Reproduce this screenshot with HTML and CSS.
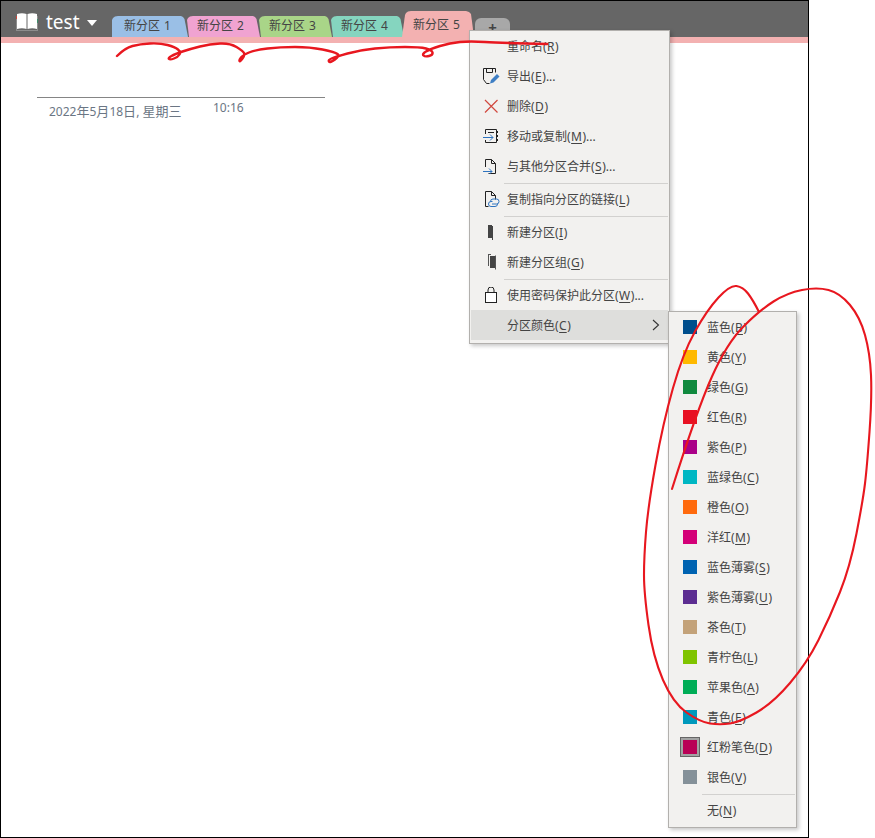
FILE: index.html
```html
<!DOCTYPE html>
<html lang="zh-CN">
<head>
<meta charset="utf-8">
<title>test</title>
<link rel="stylesheet" href="styles.css">
</head>
<body>
<div class="window">
  <header class="topbar">
    <div class="notebook">
      <svg class="book" width="22" height="18" viewBox="0 0 22 18">
        <path d="M0 3h1v14h20V3h1v15H0z" fill="#8d8d8d"/>
        <path d="M1 1c3-1 7-1 9.500 0v15C8 15 4 15 1 16z" fill="#fff"/>
        <path d="M11.500 1c3-1 6.500-1 9.500 0v15c-3-1-6.500-1-9.500 0z" fill="#fff"/>
        <rect x="0" y="3" width="1" height="3" fill="#c8453b"/>
        <rect x="21" y="6" width="1" height="4" fill="#3d8f6b"/>
      </svg>
      <span class="nb-name">test</span>
      <span class="caret"></span>
    </div>
    <nav class="tabs">
      <div class="tab tab-first tab-blue">新分区 1</div>
      <div class="tab tab-pink">新分区 2</div>
      <div class="tab tab-green">新分区 3</div>
      <div class="tab tab-teal">新分区 4</div>
      <div class="tab tab-active">新分区 5</div>
      <div class="tab-add">+</div>
    </nav>
  </header>
  <div class="strip"></div>
  <main class="page">
    <div class="page-title"></div>
    <div class="stamp">
      <span class="stamp-date"><span class="latin">2022</span>年<span class="latin">5</span>月<span class="latin">18</span>日<span class="latin">, </span>星期三</span>
      <span class="stamp-time">10:16</span>
    </div>
  </main>
</div>

<div class="menu menu-main">
  <div class="row"><span class="ico"></span><span>重命名(<u>R</u>)</span></div>
  <div class="row"><span class="ico"><svg width="17" height="16" viewBox="0 0 17 16"><path d="M.5.500h12v4M3.500.500v4h6v-4M.5.500v11l3 4h3" fill="none" stroke="#222"/><path d="M7 15.500l1-3.500 6-6 2.500 2.500-6 6z" fill="#3f7fc4"/></svg></span><span>导出(<u>E</u>)...</span></div>
  <div class="row"><span class="ico"><svg width="16" height="16" viewBox="0 0 16 16"><path d="M2 2l12.500 12.500M14.500 2L2 14.500" fill="none" stroke="#d1483e" stroke-width="1.200"/></svg></span><span>删除(<u>D</u>)</span></div>
  <div class="row"><span class="ico"><svg width="16" height="16" viewBox="0 0 16 16"><path d="M2.500 6V1.500h11v13h-11V12" fill="none" stroke="#222"/><path d="M13 3h2v2h-2zM13 7h2v2h-2zM13 11h2v2h-2z" fill="#222"/><path d="M0 9.500h10M7 6.500l3 3-3 3" fill="none" stroke="#2f74c0"/><path d="M5 4.500h6" stroke="#222" fill="none"/></svg></span><span>移动或复制(<u>M</u>)...</span></div>
  <div class="row"><span class="ico"><svg width="16" height="16" viewBox="0 0 16 16"><path d="M2.500 9V1.500h6l4 4v10h-7M8.500 1.500v4h4" fill="none" stroke="#222"/><path d="M0 13.500h9M6 10.500l3 3-3 3" fill="none" stroke="#2f74c0"/></svg></span><span>与其他分区合并(<u>S</u>)...</span></div>
  <div class="sep"></div>
  <div class="row"><span class="ico"><svg width="17" height="16" viewBox="0 0 17 16"><path d="M2.500 15.500V.5h6l4 4v4M8.500.5v4h4M2.500 15.500h3" fill="none" stroke="#222"/><path d="M9.500 10.500H8a2.500 2.500 0 0 0 0 5h4a2.500 2.500 0 0 0 2.500-2.500M9 13h4.500a2.500 2.500 0 0 0 0-5H10a2.500 2.500 0 0 0-2.500 2.500" fill="none" stroke="#2f74c0"/></svg></span><span>复制指向分区的链接(<u>L</u>)</span></div>
  <div class="sep"></div>
  <div class="row"><span class="ico"><svg width="16" height="16" viewBox="0 0 16 16"><path d="M5 1h4v1h1v14H9v-2H5z" fill="#444"/></svg></span><span>新建分区(<u>I</u>)</span></div>
  <div class="row"><span class="ico"><svg width="16" height="16" viewBox="0 0 16 16"><path d="M5.500 1v11M5 .5h3M12.500 1.500V15.500" stroke="#555" fill="none"/><path d="M7 2h5v12H7z" fill="#444"/></svg></span><span>新建分区组(<u>G</u>)</span></div>
  <div class="sep"></div>
  <div class="row"><span class="ico"><svg width="16" height="16" viewBox="0 0 16 16"><rect x="2.500" y="5.500" width="11" height="10" fill="#fff" stroke="#222"/><path d="M5 5.500V3a3 3 0 0 1 6 0v2.500" fill="none" stroke="#222"/></svg></span><span>使用密码保护此分区(<u>W</u>)...</span></div>
  <div class="row row-hot"><span class="ico"></span><span>分区颜色(<u>C</u>)</span><svg class="chev" width="8" height="12" viewBox="0 0 8 12"><path d="M1 1l5.500 5L1 11" fill="none" stroke="#333" stroke-width="1.100"/></svg></div>
</div>

<div class="menu menu-sub">
  <div class="row"><span class="chip c-blue"></span><span>蓝色(<u>B</u>)</span></div>
  <div class="row"><span class="chip c-yellow"></span><span>黄色(<u>Y</u>)</span></div>
  <div class="row"><span class="chip c-green"></span><span>绿色(<u>G</u>)</span></div>
  <div class="row"><span class="chip c-red"></span><span>红色(<u>R</u>)</span></div>
  <div class="row"><span class="chip c-purple"></span><span>紫色(<u>P</u>)</span></div>
  <div class="row"><span class="chip c-teal"></span><span>蓝绿色(<u>C</u>)</span></div>
  <div class="row"><span class="chip c-orange"></span><span>橙色(<u>O</u>)</span></div>
  <div class="row"><span class="chip c-magenta"></span><span>洋红(<u>M</u>)</span></div>
  <div class="row"><span class="chip c-mistblue"></span><span>蓝色薄雾(<u>S</u>)</span></div>
  <div class="row"><span class="chip c-mistpurple"></span><span>紫色薄雾(<u>U</u>)</span></div>
  <div class="row"><span class="chip c-tan"></span><span>茶色(<u>T</u>)</span></div>
  <div class="row"><span class="chip c-lime"></span><span>青柠色(<u>L</u>)</span></div>
  <div class="row"><span class="chip c-apple"></span><span>苹果色(<u>A</u>)</span></div>
  <div class="row"><span class="chip c-cyan"></span><span>青色(<u>E</u>)</span></div>
  <div class="row"><span class="chip c-chalk"></span><span>红粉笔色(<u>D</u>)</span></div>
  <div class="row"><span class="chip c-silver"></span><span>银色(<u>V</u>)</span></div>
  <div class="sep sep-sub"></div>
  <div class="row"><span class="chip c-none"></span><span>无(<u>N</u>)</span></div>
</div>

<svg class="ink" width="875" height="838" viewBox="0 0 875 838">
  <path class="stroke-a" d="M117 56 Q125 48 132.500 46 Q140 44 150 43.500 Q160 43 167.500 45 Q175 47 178 49.500 Q181 52 179.500 54.500 Q178 57 174 58.500 Q170 60 169 59 Q168 58 171.500 56 Q175 54 182.500 51.500 Q190 49 200 46.500 Q210 44 220 43.500 Q230 43 236.500 47 Q243 51 244 53 Q245 55 242.500 58.500 Q240 62 239.500 61 Q239 60 241 57.500 Q243 55 249 52.500 Q255 50 267.500 48.500 Q280 47 295 47 Q310 47 322.500 49.500 Q335 52 337.500 54 Q340 56 335 59.500 Q330 63 329 61.500 Q328 60 331.500 58.500 Q335 57 347.500 53.500 Q360 50 375 48.500 Q390 47 405 47 Q420 47 426 48.500 Q432 50 432.500 52.500 Q433 55 429 56 Q425 57 423.500 55.500 Q422 54 426 51.500 Q430 49 440 46 Q450 43 460 42 Q470 41 485 42 Q500 43 547 44"/>
  <path class="stroke-b" d="M672 489 Q697 410 712 376.500 Q727 343 743.500 326.500 Q760 310 773.500 301.500 Q787 293 802 290 Q817 287 828.500 290 Q840 293 850 305 Q860 317 865 335 Q870 353 871 375 Q872 397 869.500 432 Q867 467 865 483.500 Q863 500 856.500 533.500 Q850 567 840 592 Q830 617 818.500 640 Q807 663 790 683 Q773 703 756.500 712.500 Q740 722 730 723.500 Q720 725 710 723.500 Q700 722 686.500 712.500 Q673 703 663 680 Q653 657 648.500 625 Q644 593 644 575 Q644 557 646 532 Q648 507 655.500 465 Q663 423 673 388 Q683 353 695 331.500 Q707 310 718.500 297.500 Q730 285 736.500 286 Q743 287 748 293.500 Q753 300 759 312"/>
</svg>
</body>
</html>
```
FILE: styles.css
```css
* { box-sizing: border-box; }

html, body {
  margin: 0;
  padding: 0;
  background: #fff;
}

body {
  position: relative;
  width: 875px;
  height: 838px;
  overflow: hidden;
  font-family: "Noto Sans", "Noto Sans CJK SC", sans-serif;
  font-size: 12px;
  color: #444;
}

.window {
  width: 809px;
  height: 838px;
  border: 1px solid #000;
  background: #fff;
}

.topbar {
  display: flex;
  align-items: flex-end;
  height: 36px;
  background: #666;
}

.notebook {
  display: flex;
  align-items: center;
  width: 111px;
  height: 36px;
  padding: 6px 0 0 15px;
  flex: none;
}

.nb-name {
  margin-left: 8px;
  color: #fff;
  font-size: 19px;
  line-height: 24px;
}

.caret {
  width: 0;
  height: 0;
  margin: 2px 0 0 7px;
  border-left: 5px solid transparent;
  border-right: 5px solid transparent;
  border-top: 6px solid #fff;
}

.tabs {
  display: flex;
  align-items: flex-end;
}

.tab {
  width: 75px;
  height: 21px;
  margin-right: -3px;
  padding-left: 12px;
  line-height: 20px;
  color: #444;
  word-spacing: 1px;
  white-space: nowrap;
  clip-path: polygon(4px 100%, 2px 4px, 3px 2px, 5px 0.5px, 8px 0, calc(100% - 7px) 0, calc(100% - 5px) 1px, calc(100% - 3.500px) 3px, 100% 100%);
}

.tab-first {
  width: 76px;
  clip-path: polygon(0 100%, 0 4px, 1px 2px, 3px 0.5px, 6px 0, calc(100% - 7px) 0, calc(100% - 5px) 1px, calc(100% - 3.500px) 3px, 100% 100%);
}

.tab-blue { background: #9abfe6; }
.tab-pink { background: #f0a3d1; }
.tab-green { background: #a9d588; }
.tab-teal { background: #85d5bf; }

.tab-active {
  width: 72px;
  height: 26px;
  margin-left: 1px;
  margin-right: 0;
  padding-left: 11px;
  line-height: 27px;
  background: #f3b1b1;
  clip-path: polygon(0 100%, 3px 4px, 4px 2px, 6px 0.5px, 9px 0, calc(100% - 8px) 0, calc(100% - 5px) 1px, calc(100% - 3px) 3px, 100% 100%);
}

.tab-add {
  width: 35px;
  height: 19px;
  margin-left: 1px;
  text-align: center;
  font-size: 15px;
  font-weight: 700;
  line-height: 18px;
  color: #444;
  background: #a8a8a8;
  border-radius: 6px 6px 0 0;
}

.strip {
  height: 6px;
  background: #f3b1b1;
}

.page {
  padding: 54px 0 0 36px;
}

.page-title {
  width: 288px;
  border-top: 1px solid #858585;
}

.stamp {
  display: flex;
  align-items: flex-start;
  padding-left: 12px;
  color: #6b7684;
}

.stamp-date {
  margin-top: 4px;
  width: 164px;
  font-size: 13px;
  line-height: 18px;
}

.latin {
  font-size: 12px;
}

.stamp-time {
  font-size: 12px;
  line-height: 18px;
  margin-top: 1px;
}

.menu {
  position: absolute;
  background: #f2f1ef;
  border: 1px solid #b2b0ad;
  box-shadow: 2px 2px 4px rgba(0, 0, 0, 0.22);
}

.menu-main {
  left: 469px;
  top: 30px;
  width: 201px;
  height: 314px;
  padding: 0 1px;
}

.menu-sub {
  left: 668px;
  top: 311px;
  width: 129px;
  height: 517px;
  padding: 0 1px;
}

.row {
  display: flex;
  align-items: center;
  height: 30px;
  padding-left: 12px;
  white-space: nowrap;
  color: #444;
}

.row u {
  margin: 0 0.500px;
  text-underline-offset: 2px;
}

.menu-main .ico {
  display: flex;
  width: 17px;
  height: 16px;
  margin-right: 7px;
  flex: none;
}

.menu-main .ico svg {
  display: block;
}

.row-hot {
  position: relative;
  background: #dededc;
}

.chev {
  position: absolute;
  right: 8px;
  top: 9px;
}

.sep {
  height: 3px;
  margin-left: 33px;
  border-top: 1px solid #d2d1cf;
  margin-top: 2px;
  margin-bottom: -2px;
}

.sep-sub {
  margin-left: 32px;
}

.chip {
  width: 14px;
  height: 14px;
  margin: 0 10px 0 0.500px;
  flex: none;
}

.menu-sub .row {
  padding-left: 12.500px;
}

.c-blue { background: #004e8c; }
.c-yellow { background: #ffb900; }
.c-green { background: #10893e; }
.c-red { background: #e81123; }
.c-purple { background: #aa0088; }
.c-teal { background: #00b7c3; }
.c-orange { background: #ff6a0d; }
.c-magenta { background: #d40078; }
.c-mistblue { background: #0063b1; }
.c-mistpurple { background: #5c2d91; }
.c-tan { background: #c3a279; }
.c-lime { background: #7fc400; }
.c-apple { background: #00ad56; }
.c-cyan { background: #0099bc; }
.c-chalk {
  background: #b90055;
  box-shadow: 0 0 0 3px #a3a3a3;
  position: relative;
}
.c-chalk::after {
  content: "";
  position: absolute;
  inset: -3px;
  border: 1px solid #666;
}
.c-silver { background: #859199; }
.c-none { background: transparent; }

.ink {
  position: absolute;
  left: 0;
  top: 0;
  pointer-events: none;
}

.ink path {
  fill: none;
  stroke: #e8171f;
  stroke-linecap: round;
  stroke-linejoin: round;
}

.stroke-a { stroke-width: 2.400; }
.stroke-b { stroke-width: 2.100; }
```
